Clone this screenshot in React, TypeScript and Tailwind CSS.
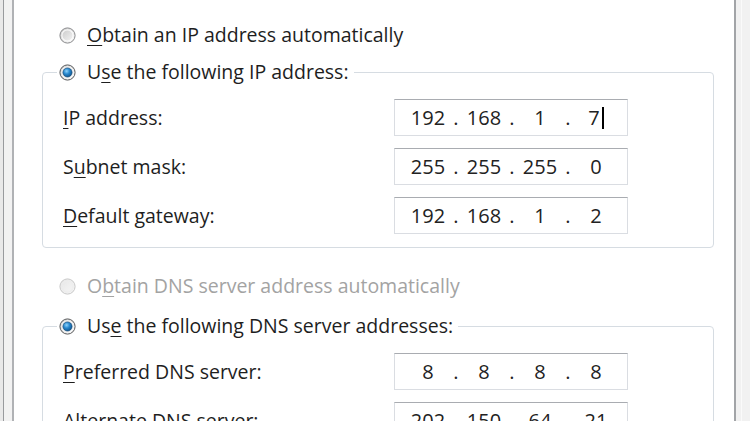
import React, { useId } from "react";

type RadioState = "off" | "on" | "disabled";

const Radio = ({ state }: { state: RadioState }) => {
  const id = useId().replace(/:/g, "");
  const ring = state === "disabled" ? "#c8c8c8" : state === "on" ? "#5a5b5d" : "#8b8c8e";
  return (
    <svg width="17" height="17" viewBox="0 0 17 17" className="shrink-0">
      <defs>
        <linearGradient id={`f${id}`} x1="0" y1="0" x2="1" y2="1">
          <stop offset="0" stopColor={state === "disabled" ? "#e6e6e6" : "#c4c4c4"} />
          <stop offset="1" stopColor={state === "disabled" ? "#f7f7f7" : "#fbfbfb"} />
        </linearGradient>
        <radialGradient id={`d${id}`} cx="0.4" cy="0.35" r="0.7">
          <stop offset="0" stopColor="#8fd3fb" />
          <stop offset="0.45" stopColor="#2a8ad0" />
          <stop offset="1" stopColor="#0b4e86" />
        </radialGradient>
      </defs>
      <circle cx="8.5" cy="8.5" r="7.6" fill={`url(#f${id})`} stroke={ring} strokeWidth="1" />
      <circle cx="8.5" cy="8.5" r="5.6" fill="none" stroke={state === "disabled" ? "#ececec" : "#ffffff"} strokeWidth="1.2" opacity="0.8" />
      {state === "on" && <circle cx="8.5" cy="8.5" r="4.6" fill={`url(#d${id})`} stroke="#174a75" strokeWidth="0.6" />}
    </svg>
  );
};

const Acc = ({ children }: { children: React.ReactNode }) => (
  <span className="underline decoration-1 underline-offset-[3px]">{children}</span>
);

const IpBox = ({ parts, caret }: { parts: string[]; caret?: boolean }) => (
  <div className="flex items-center h-[37px] w-[234px] bg-white border border-[#dadde2] border-t-[#a9acb1] pl-[8px] text-[20px] text-[#222]">
    {parts.map((p, i) => (
      <React.Fragment key={i}>
        {i > 0 && <span className="w-[6px] text-center">.</span>}
        <span className="w-[50px] text-center">
          {p}
          {caret && i === 3 && <span className="inline-block w-[2px] h-[22px] bg-black align-middle ml-[2px] -mt-[3px]" />}
        </span>
      </React.Fragment>
    ))}
  </div>
);

const Row = ({ label, parts, caret }: { label: React.ReactNode; parts: string[]; caret?: boolean }) => (
  <div className="flex items-center">
    <div className="w-[331px]">{label}</div>
    <IpBox parts={parts} caret={caret} />
  </div>
);

const Group = ({ legend, children }: { legend: React.ReactNode; children: React.ReactNode }) => (
  <fieldset className="ml-[28px] w-[672px] border border-[#d6dce2] rounded-[4px]">
    <legend className="ml-[14px] pl-[2px] pr-[5px]">
      <div className="flex items-center h-[30px] gap-[11px]">{legend}</div>
    </legend>
    <div className="pl-[20px] pt-[12px] pb-[13px] flex flex-col gap-[12px]">{children}</div>
  </fieldset>
);

const App = () => {
  return (
    <div
      className="w-[750px] h-[421px] overflow-hidden flex bg-white text-[19.5px] text-[#1e1e1e]"
      style={{ fontFamily: '"Open Sans", "Noto Sans", sans-serif' }}
    >
      {/* left frame */}
      <div className="w-[3px] bg-[#e9e9e9]" />
      <div className="w-px bg-[#999b9e]" />
      <div className="w-[8px] bg-[#f2f2f2]" />
      <div className="w-[2px] bg-[#b0b2b5]" />

      <div className="flex-1 pt-[20px]">
        <div className="flex items-center h-[30px] gap-[11px] pl-[45px]">
          <Radio state="off" />
          <span>
            <Acc>O</Acc>btain an IP address automatically
          </span>
        </div>

        <div className="mt-[7px]">
          <Group
            legend={
              <>
                <Radio state="on" />
                <span>
                  U<Acc>s</Acc>e the following IP address:
                </span>
              </>
            }
          >
            <Row label={<><Acc>I</Acc>P address:</>} parts={["192", "168", "1", "7"]} caret />
            <Row label={<>S<Acc>u</Acc>bnet mask:</>} parts={["255", "255", "255", "0"]} />
            <Row label={<><Acc>D</Acc>efault gateway:</>} parts={["192", "168", "1", "2"]} />
          </Group>
        </div>

        <div className="flex items-center h-[30px] gap-[11px] pl-[45px] mt-[23px] text-[#a3a3a3]">
          <Radio state="disabled" />
          <span>
            O<Acc>b</Acc>tain DNS server address automatically
          </span>
        </div>

        <div className="mt-[10px]">
          <Group
            legend={
              <>
                <Radio state="on" />
                <span>
                  Us<Acc>e</Acc> the following DNS server addresses:
                </span>
              </>
            }
          >
            <Row label={<><Acc>P</Acc>referred DNS server:</>} parts={["8", "8", "8", "8"]} />
            <Row label={<><Acc>A</Acc>lternate DNS server:</>} parts={["202", "150", "64", "21"]} />
          </Group>
        </div>
      </div>

      {/* right frame */}
      <div className="w-[2px] bg-[#a2a4a7]" />
      <div className="w-[14px] bg-[#f1f1f1] flex">
        <div className="w-[5px]" />
        <div className="w-px bg-[#fafafa]" />
      </div>
    </div>
  );
};

export default App;
